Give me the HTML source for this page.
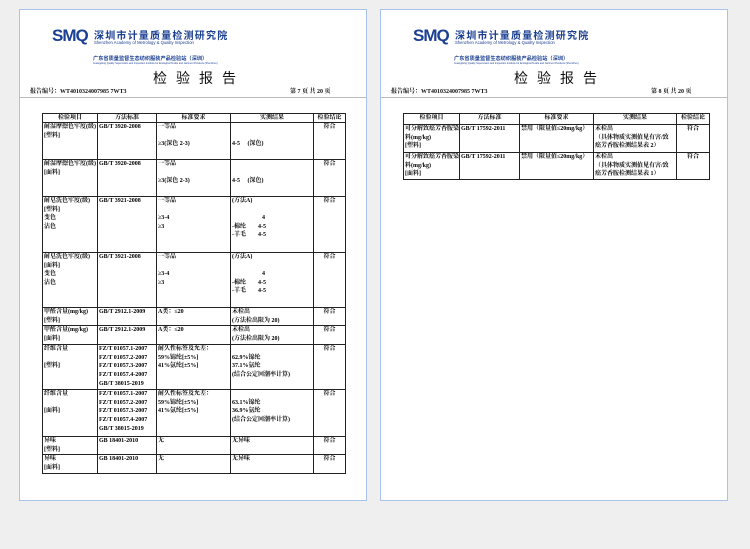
<!DOCTYPE html>
<html><head><meta charset="utf-8"><style>
*{margin:0;padding:0;box-sizing:border-box}
body{width:750px;height:549px;background:#efefef;position:relative;overflow:hidden;font-family:"Liberation Serif","Noto Serif CJK SC",serif;color:#111}
.page{position:absolute;top:9px;height:492px;background:#fff;border:1px solid #a9c3ea}
.hl{position:absolute;left:0;right:0;top:87px;height:1px;background:#bbb}
.smq{position:absolute;font-family:"Liberation Sans",sans-serif;font-weight:bold;color:#1b3f91;font-size:17px;letter-spacing:-1px}
.cn{position:absolute;font-family:"Liberation Sans","Noto Sans CJK SC",sans-serif;font-weight:bold;color:#1b3f91;font-size:10px;letter-spacing:1.2px;white-space:nowrap}
.en{position:absolute;font-family:"Liberation Sans",sans-serif;color:#1b3f91;font-size:4.2px;white-space:nowrap}
.cn2{position:absolute;font-family:"Liberation Sans","Noto Sans CJK SC",sans-serif;font-weight:bold;color:#1b3f91;font-size:5.2px;white-space:nowrap}
.ttl{position:absolute;font-family:"Liberation Sans","Noto Sans CJK SC",sans-serif;font-size:14px;letter-spacing:9px;color:#111;white-space:nowrap}
.sm{position:absolute;font-size:6px;white-space:nowrap;color:#111;font-weight:bold}
table{position:absolute;border-collapse:collapse;table-layout:fixed;border:1.5px solid #222}
td{border:1px solid #222;vertical-align:top;font-size:6px;line-height:8.6px;padding:0 1px;white-space:nowrap;overflow:hidden;color:#000;font-weight:bold}
tr.h td{text-align:center;padding:0;line-height:8px}
td.c{text-align:center}
</style></head><body>

<div class="page" style="left:19px;width:348px">
  <div class="smq" style="left:32px;top:16px">SMQ</div>
  <div class="cn" style="left:74px;top:17px">深圳市计量质量检测研究院</div>
  <div class="en" style="left:74px;top:30px">Shenzhen Academy of Metrology &amp; Quality Inspection</div>
  <div class="cn2" style="left:73px;top:45px">广东省质量监督生态纺织服装产品检验站（深圳）</div>
  <div class="en" style="left:73px;top:52px;font-size:2.5px">Guangdong Quality Supervision and Inspection Institute for Ecological Textile and Garment Products (Shenzhen)</div>
  <div class="ttl" style="left:133px;top:58px">检验报告</div>
  <div class="sm" style="left:10px;top:76px">报告编号：WT4010324007985 7WT3</div>
  <div class="sm" style="left:270px;top:76px">第 7 页 共 20 页</div>
  <div class="hl"></div>
</div>

<div class="page" style="left:380px;width:348px">
  <div class="smq" style="left:32px;top:16px">SMQ</div>
  <div class="cn" style="left:74px;top:17px">深圳市计量质量检测研究院</div>
  <div class="en" style="left:74px;top:30px">Shenzhen Academy of Metrology &amp; Quality Inspection</div>
  <div class="cn2" style="left:73px;top:45px">广东省质量监督生态纺织服装产品检验站（深圳）</div>
  <div class="en" style="left:73px;top:52px;font-size:2.5px">Guangdong Quality Supervision and Inspection Institute for Ecological Textile and Garment Products (Shenzhen)</div>
  <div class="ttl" style="left:133px;top:58px">检验报告</div>
  <div class="sm" style="left:10px;top:76px">报告编号：WT4010324007985 7WT3</div>
  <div class="sm" style="left:270px;top:76px">第 8 页 共 20 页</div>
  <div class="hl"></div>
</div>

<table style="left:42px;top:113px;width:303px">
<colgroup><col style="width:55px"><col style="width:59px"><col style="width:74px"><col style="width:83px"><col style="width:32px"></colgroup>
<tr class="h" style="height:9px"><td>检验项目</td><td>方法标准</td><td>标准要求</td><td>实测结果</td><td>检验结论</td></tr>
<tr style="height:37px"><td>耐湿摩擦色牢度(级)<br>[塑料]</td><td>GB/T 3920-2008</td><td>一等品<br><br>≥3(深色 2-3)</td><td><br><br>4-5　 (深色)</td><td class="c">符合</td></tr>
<tr style="height:37px"><td>耐湿摩擦色牢度(级)<br>[面料]</td><td>GB/T 3920-2008</td><td>一等品<br><br>≥3(深色 2-3)</td><td><br><br>4-5　 (深色)</td><td class="c">符合</td></tr>
<tr style="height:56px"><td>耐皂洗色牢度(级)<br>[塑料]<br>变色<br>沾色</td><td>GB/T 3921-2008</td><td>一等品<br><br>≥3-4<br>≥3</td><td>(方法A)<br><br>　　　　　4<br>-棉纶　　4-5<br>-羊毛　　4-5</td><td class="c">符合</td></tr>
<tr style="height:55px"><td>耐皂洗色牢度(级)<br>[面料]<br>变色<br>沾色</td><td>GB/T 3921-2008</td><td>一等品<br><br>≥3-4<br>≥3</td><td>(方法A)<br><br>　　　　　4<br>-棉纶　　4-5<br>-羊毛　　4-5</td><td class="c">符合</td></tr>
<tr style="height:18px"><td>甲醛含量(mg/kg)<br>[塑料]</td><td>GB/T 2912.1-2009</td><td>A类：≤20</td><td>未检出<br>(方法检出限为 20)</td><td class="c">符合</td></tr>
<tr style="height:19px"><td>甲醛含量(mg/kg)<br>[面料]</td><td>GB/T 2912.1-2009</td><td>A类：≤20</td><td>未检出<br>(方法检出限为 20)</td><td class="c">符合</td></tr>
<tr style="height:45px"><td>纤维含量<br><br>[塑料]</td><td>FZ/T 01057.1-2007<br>FZ/T 01057.2-2007<br>FZ/T 01057.3-2007<br>FZ/T 01057.4-2007<br>GB/T 38015-2019</td><td>耐久性标签及允差：<br>59%锦纶[±5%]<br>41%氨纶[±5%]</td><td><br>62.9%锦纶<br>37.1%氨纶<br>(结合公定回潮率计算)</td><td class="c">符合</td></tr>
<tr style="height:47px"><td>纤维含量<br><br>[面料]</td><td>FZ/T 01057.1-2007<br>FZ/T 01057.2-2007<br>FZ/T 01057.3-2007<br>FZ/T 01057.4-2007<br>GB/T 38015-2019</td><td>耐久性标签及允差：<br>59%锦纶[±5%]<br>41%氨纶[±5%]</td><td><br>63.1%锦纶<br>36.9%氨纶<br>(结合公定回潮率计算)</td><td class="c">符合</td></tr>
<tr style="height:18px"><td>异味<br>[塑料]</td><td>GB 18401-2010</td><td>无</td><td>无异味</td><td class="c">符合</td></tr>
<tr style="height:19px"><td>异味<br>[面料]</td><td>GB 18401-2010</td><td>无</td><td>无异味</td><td class="c">符合</td></tr>
</table>

<table style="left:403px;top:113px;width:306px">
<colgroup><col style="width:56px"><col style="width:60px"><col style="width:74px"><col style="width:83px"><col style="width:33px"></colgroup>
<tr class="h" style="height:11px"><td>检验项目</td><td>方法标准</td><td>标准要求</td><td>实测结果</td><td>检验结论</td></tr>
<tr style="height:28px"><td>可分解致癌芳香胺染<br>料(mg/kg)<br>[塑料]</td><td>GB/T 17592-2011</td><td>禁用（限量值≤20mg/kg）</td><td>未检出<br>（具体物质实测值见有害/致<br>癌芳香胺检测结果表 2）</td><td class="c">符合</td></tr>
<tr style="height:27px"><td>可分解致癌芳香胺染<br>料(mg/kg)<br>[面料]</td><td>GB/T 17592-2011</td><td>禁用（限量值≤20mg/kg）</td><td>未检出<br>（具体物质实测值见有害/致<br>癌芳香胺检测结果表 1）</td><td class="c">符合</td></tr>
</table>

</body></html>
